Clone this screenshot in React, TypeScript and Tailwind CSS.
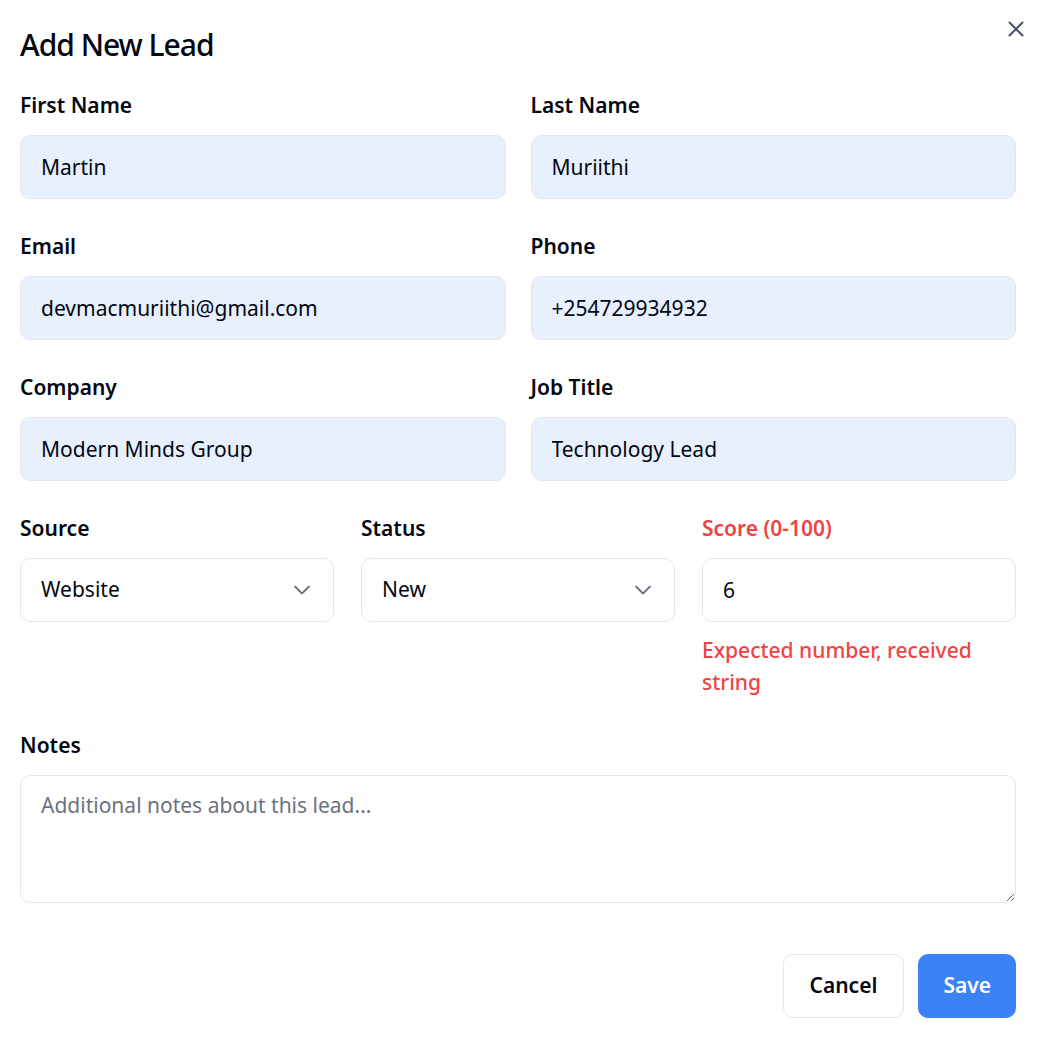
import React from "react";

const font = { fontFamily: '"Noto Sans", "Open Sans", sans-serif' };

function Label({ children, error }: { children: React.ReactNode; error?: boolean }) {
  return (
    <label
      className={`block text-[21px] leading-[28px] font-semibold ${error ? "text-[#ef4444]" : "text-[#030712]"}`}
    >
      {children}
    </label>
  );
}

function TextField({ label, value, filled = true }: { label: string; value: string; filled?: boolean }) {
  return (
    <div className="flex flex-col">
      <Label>{label}</Label>
      <input
        defaultValue={value}
        readOnly
        style={font}
        className={`mt-[16px] h-[64px] w-full rounded-[10px] border border-[#e5e7eb] px-[20px] text-[21px] text-[#030712] outline-none ${filled ? "bg-[#e8f0fe]" : "bg-white"}`}
      />
    </div>
  );
}

function Chevron() {
  return (
    <svg width="16" height="9" viewBox="0 0 16 9" className="pointer-events-none absolute right-[24px] top-1/2 -translate-y-1/2">
      <path d="M1 1 L8 8 L15 1" fill="none" stroke="#6b7280" strokeWidth="1.8" strokeLinecap="round" strokeLinejoin="round" />
    </svg>
  );
}

function SelectField({ label, value }: { label: string; value: string }) {
  return (
    <div className="flex flex-col">
      <Label>{label}</Label>
      <div className="relative mt-[16px]">
        <select
          defaultValue={value}
          style={font}
          className="h-[64px] w-full appearance-none rounded-[10px] border border-[#e5e7eb] bg-white px-[20px] text-[21px] text-[#030712] outline-none"
        >
          <option>{value}</option>
        </select>
        <Chevron />
      </div>
    </div>
  );
}

export default function App() {
  return (
    <div style={font} className="relative min-h-[1054px] w-[1045px] bg-white text-[#030712]">
      <svg width="16" height="16" viewBox="0 0 16 16" className="absolute left-[1008px] top-[21px]">
        <path d="M1.5 1.5 L14.5 14.5 M14.5 1.5 L1.5 14.5" stroke="#4b5563" strokeWidth="2" strokeLinecap="round" />
      </svg>
      <div className="w-[1016px] pl-[20px] pt-[25px]">
        <h2 className="text-[30px] leading-[40px] font-medium tracking-[-1px] text-[#030712]">Add New Lead</h2>

        <div className="mt-[26px] grid grid-cols-2 gap-x-[25px] gap-y-[33px]">
          <TextField label="First Name" value="Martin" />
          <TextField label="Last Name" value="Muriithi" />
          <TextField label="Email" value="devmacmuriithi@gmail.com" />
          <TextField label="Phone" value="+254729934932" />
          <TextField label="Company" value="Modern Minds Group" />
          <TextField label="Job Title" value="Technology Lead" />
        </div>

        <div className="mt-[33px] grid grid-cols-3 gap-x-[27px]">
          <SelectField label="Source" value="Website" />
          <SelectField label="Status" value="New" />
          <div className="flex flex-col">
            <Label error>Score (0-100)</Label>
            <input
              defaultValue="6"
              readOnly
              style={font}
              className="mt-[16px] h-[64px] w-full rounded-[10px] border border-[#e5e7eb] bg-white px-[20px] text-[21px] text-[#030712] outline-none"
            />
            <p className="mt-[12px] text-[21px] leading-[32px] font-medium text-[#ef4444]">
              Expected number, received string
            </p>
          </div>
        </div>

        <div className="mt-[33px] flex flex-col">
          <Label>Notes</Label>
          <textarea
            placeholder="Additional notes about this lead..."
            style={font}
            className="mt-[16px] h-[128px] w-full rounded-[10px] border border-[#e5e7eb] bg-white px-[20px] pt-[13px] text-[21px] leading-[32px] text-[#030712] outline-none placeholder:text-[#6b7280]"
          />
        </div>

        <div className="mt-[51px] flex justify-end gap-[14px]">
          <button className="h-[64px] rounded-[10px] border border-[#e5e7eb] bg-white px-[26px] text-[21px] font-semibold text-[#030712]">
            Cancel
          </button>
          <button className="h-[64px] rounded-[10px] bg-[#3b82f6] px-[25px] text-[21px] font-semibold text-white">
            Save
          </button>
        </div>
      </div>
    </div>
  );
}
